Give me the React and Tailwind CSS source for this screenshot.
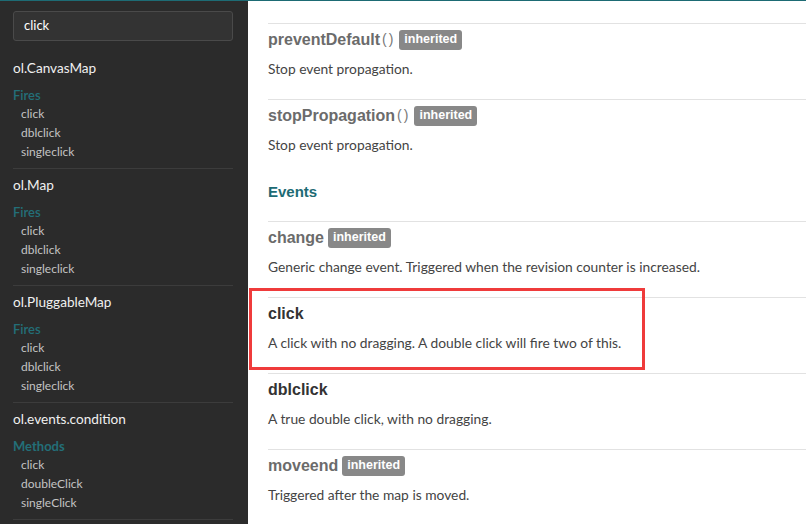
const groups = [
  { name: 'ol.CanvasMap', kind: 'Fires', items: ['click', 'dblclick', 'singleclick'] },
  { name: 'ol.Map', kind: 'Fires', items: ['click', 'dblclick', 'singleclick'] },
  { name: 'ol.PluggableMap', kind: 'Fires', items: ['click', 'dblclick', 'singleclick'] },
  { name: 'ol.events.condition', kind: 'Methods', items: ['click', 'doubleClick', 'singleClick'] },
];

function Badge() {
  return (
    <span className="ml-[4px] inline-flex h-[20px] items-center rounded-[3px] bg-[#888888] px-[5px] font-['Liberation_Sans',Arial,sans-serif] text-[12.5px] font-bold text-white">
      inherited
    </span>
  );
}

function Member({ name, method, inherited, desc }) {
  return (
    <div className="h-[76px] border-t border-[#e2e2e2]">
      <div className="flex h-[31px] items-center">
        <span
          className={`font-['Liberation_Sans',Arial,sans-serif] text-[16px] font-bold ${
            inherited ? 'text-[#6b6b6b]' : 'text-[#333333]'
          }`}
        >
          {name}
        </span>
        {method && (
          <span className="ml-[2px] font-['Liberation_Sans',Arial,sans-serif] text-[14px] tracking-[2px] text-[#777777]">()</span>
        )}
        {inherited && <Badge />}
      </div>
      <div className="flex h-[28px] items-center text-[13.8px] text-[#444444]">{desc}</div>
    </div>
  );
}

export default function App() {
  return (
    <div className="relative h-[524px] w-[806px] overflow-hidden bg-white font-['Lato','Open_Sans',sans-serif]">
      <div className="h-px bg-[#1d6b74]" />
      <div className="flex h-[523px]">
        {/* sidebar */}
        <div className="w-[248px] shrink-0 bg-[#2b2b2b] px-[13px] pt-[10px]">
          <div className="flex h-[30px] w-[220px] items-center rounded-[3px] border border-[#4a4a4a] bg-[#333333] pl-[10px] text-[13px] text-white">
            click
          </div>
          <div className="mt-[11px]">
            {groups.map((g, i) => (
              <div key={g.name} className={`w-[220px] pb-[7px] ${i > 0 ? 'border-t border-[#3c3c3c]' : ''}`}>
                <div className="flex h-[33px] items-center text-[13.6px] text-[#f0f0f0]">{g.name}</div>
                <div
                  className={`flex h-[19px] items-center pt-[2px] text-[13px] text-[#236f78] ${
                    g.kind === 'Methods' ? 'font-bold' : 'font-semibold'
                  }`}
                >
                  {g.kind}
                </div>
                {g.items.map((it) => (
                  <div key={it} className="flex h-[19px] items-center pl-[8px] text-[12px] text-[#c4c4c4]">
                    {it}
                  </div>
                ))}
              </div>
            ))}
            <div className="w-[220px] border-t border-[#3c3c3c]" />
          </div>
        </div>

        {/* main */}
        <div className="flex-1 pl-[20px] pt-[22px]">
          <Member name="preventDefault" method inherited desc="Stop event propagation." />
          <Member name="stopPropagation" method inherited desc="Stop event propagation." />
          <div className="h-[46px] pt-[8px] font-['Liberation_Sans',Arial,sans-serif] text-[15px] font-bold leading-[18px] text-[#1d6b74]">
            Events
          </div>
          <Member name="change" inherited desc="Generic change event. Triggered when the revision counter is increased." />
          <Member name="click" desc="A click with no dragging. A double click will fire two of this." />
          <Member name="dblclick" desc="A true double click, with no dragging." />
          <Member name="moveend" inherited desc="Triggered after the map is moved." />
        </div>
      </div>

      {/* annotation box */}
      <div className="absolute left-[249px] top-[288px] h-[82px] w-[396px] border-[3px] border-[#ef3b3b]" />
    </div>
  );
}
